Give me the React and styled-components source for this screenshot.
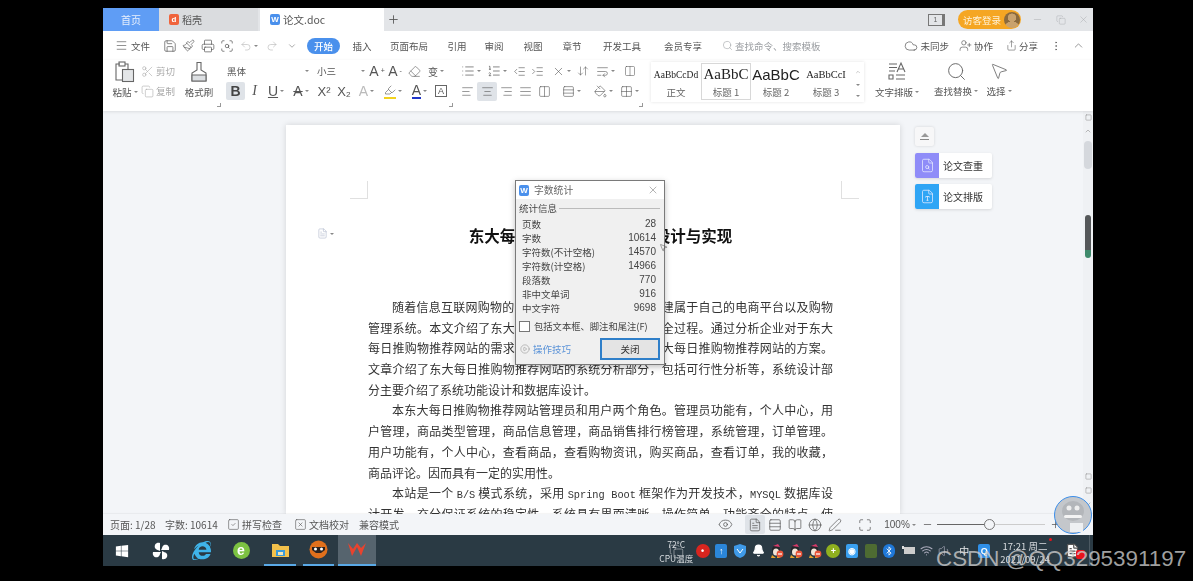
import React from "react";
import styled, { createGlobalStyle } from "styled-components";
import {
  Menu, Save, Printer, Undo2, Redo2, ChevronDown, ChevronUp, Search, Cloud, UserPlus, Share, EllipsisVertical,
  Scissors, Copy, Paintbrush, Eraser, List, ListOrdered, IndentDecrease, IndentIncrease,
  AlignLeft, AlignCenter, AlignRight, AlignJustify, Columns2, PaintBucket, Grid2x2, Eye, FileText, Rows3,
  BookOpen, Globe, PenLine, Maximize, Minus, Plus, SquareCheck, SquareX, Bell, Wifi, Volume1,
  Bluetooth, CirclePlay, X, Square, Highlighter, ArrowDownUp, WrapText, ScanSearch, FileSearch, FileType, MousePointer2
} from "lucide-react";
import { FaInternetExplorer, FaWindows } from "react-icons/fa";

const GlobalStyle = createGlobalStyle`
  html, body { margin: 0; background: #000; overflow: hidden; }
  body { font-family: "Noto Sans CJK SC", "Liberation Sans", sans-serif; color: #444; }
`;

const Stage = styled.div`
  width: 1193px;
  height: 581px;
  padding: 8px 0 0 103px;
  box-sizing: border-box;
  position: relative;
`;

const Win = styled.div`
  width: 990px;
  height: 558px;
  display: flex;
  flex-direction: column;
  position: relative;
  background: #fff;
  overflow: hidden;
  filter: blur(0.35px);
`;

/* title tabs */
const TabBar = styled.div`
  height: 23px;
  flex: none;
  display: flex;
  align-items: stretch;
  background: #e3e5e8;
  font-size: 10px;
`;

const HomeTab = styled.div`
  width: 56px;
  background: #5f9df5;
  color: #e8f0fd;
  display: flex;
  align-items: center;
  justify-content: center;
`;

const DocTab = styled.div`
  width: ${p => p.$w}px;
  margin-right: ${p => p.$mr || 0}px;
  background: ${p => (p.$active ? "#fff" : "#dadcdf")};
  display: flex;
  align-items: center;
  gap: 3px;
  padding-left: 10px;
  box-sizing: border-box;
  color: #555;
  font-size: ${p => (p.$active ? 10.5 : 10)}px;
`;

const TabIcon = styled.span`
  width: 10px;
  height: 11px;
  border-radius: 2px;
  background: ${p => p.$c};
  color: #fff;
  font: bold 8px "Liberation Sans", sans-serif;
  display: flex;
  align-items: center;
  justify-content: center;
`;

const AddTab = styled.div`
  width: 18px;
  display: flex;
  align-items: center;
  justify-content: center;
  color: #555;
`;

const TabRight = styled.div`
  margin: 0 -2px 0 auto;
  display: flex;
  align-items: center;
  color: #a5a8ab;
`;

const SlateBox = styled.span`
  width: 13px;
  height: 10px;
  border: 1px solid #777;
  border-right-width: 3px;
  font: 7px "Liberation Sans", sans-serif;
  color: #666;
  display: flex;
  align-items: center;
  justify-content: center;
  margin-right: 13px;
`;

const Guest = styled.div`
  width: 63px;
  height: 19px;
  border-radius: 10px;
  background: #f5a623;
  color: #fff2d8;
  font-size: 9.5px;
  display: flex;
  align-items: center;
  justify-content: space-between;
  padding: 0 1px 0 5px;
  box-sizing: border-box;
  margin-right: 5px;
`;

const GuestFace = styled.span`
  width: 16px;
  height: 16px;
  border-radius: 50%;
  background: radial-gradient(circle at 50% 36%, #c9a26d 0 4px, transparent 4.5px), radial-gradient(circle at 50% 110%, #c9a26d 0 8px, #8a6a3e 8.5px);
`;

const WinBtn = styled.span`
  width: 23px;
  display: flex;
  justify-content: center;
`;

/* menu row */
const MenuRow = styled.div`
  height: 29px;
  flex: none;
  display: flex;
  align-items: center;
  padding-left: 12px;
  font-size: 9.5px;
  color: #555;
`;

const FileMenu = styled.div`
  width: 45px;
  display: flex;
  align-items: center;
  gap: 3px;
`;

const Tool = styled.div`
  width: ${p => p.$w || 19}px;
  height: ${p => p.$h || 19}px;
  margin-right: ${p => p.$mr || 0}px;
  flex: none;
  display: flex;
  align-items: center;
  justify-content: center;
  gap: 2px;
  color: ${p => p.$c || "#555"};
  background: ${p => (p.$active ? "#dfe3e8" : "transparent")};
  border-radius: 2px;
  font: ${p => p.$font || '14px "Liberation Sans", sans-serif'};
`;

const Caret = styled.i`
  width: 0;
  height: 0;
  flex: none;
  border: 2px solid transparent;
  border-top: 2.5px solid #888;
  border-bottom: 0;
`;

const Sup = styled.sup`
  font-size: 7px;
  line-height: 0;
`;

const Marked = styled.span`
  display: flex;
  align-items: center;
  height: 14px;
  line-height: 13px;
  border-bottom: 2px solid ${p => p.$c};
`;

const BoxedA = styled.span`
  width: 12px;
  height: 12px;
  box-sizing: border-box;
  border: 1px solid #666;
  font: 9px/10px "Liberation Sans", sans-serif;
  text-align: center;
`;

const StartPill = styled.div`
  width: 33px;
  height: 16px;
  margin-left: 5px;
  border-radius: 8px;
  background: #4a90ec;
  color: #fff;
  font-weight: 500;
  display: flex;
  align-items: center;
  justify-content: center;
`;

const MenuTab = styled.div`
  width: ${p => p.$w}px;
  text-align: center;
  flex: none;
`;

const SearchBox = styled.div`
  margin-left: 14px;
  display: flex;
  align-items: center;
  gap: 2px;
  color: #9a9da1;
`;

const MenuRight = styled.div`
  margin-left: auto;
  display: flex;
  align-items: center;
  padding-right: 8px;
`;

const MenuAction = styled.div`
  display: flex;
  align-items: center;
  gap: 2px;
  margin-right: ${p => p.$mr}px;
`;

/* ribbon */
const Ribbon = styled.div`
  height: 51px;
  flex: none;
  display: flex;
  padding-left: 12px;
  box-shadow: 0 1px 3px rgba(0, 0, 0, 0.1);
  position: relative;
  z-index: 2;
  background: #fff;
`;

const Group = styled.div`
  width: ${p => p.$w}px;
  flex: none;
  position: relative;
  display: ${p => (p.$flex ? "flex" : "block")};
  padding-top: 1px;
  box-sizing: border-box;
  ${p => p.$launcher && `
    &::after {
      content: "";
      position: absolute;
      right: ${p.$launcher}px;
      bottom: 4px;
      width: 3px;
      height: 3px;
      border-right: 1px solid #999;
      border-bottom: 1px solid #999;
    }
  `}
`;

const Row = styled.div`
  display: flex;
  align-items: center;
  height: 20px;
`;

const BigTool = styled.div`
  width: ${p => p.$w}px;
  margin-left: ${p => p.$ml || 0}px;
  flex: none;
  display: flex;
  flex-direction: column;
  align-items: center;
  font-size: 9.5px;
  color: #555;
`;

const BigIcon = styled.div`
  height: 22px;
  display: flex;
  align-items: center;
  color: #666;
`;

const BigLabel = styled.div`
  height: 18px;
  display: flex;
  align-items: center;
  gap: 2px;
  white-space: nowrap;
`;

const SmallCol = styled.div`
  width: 38px;
  margin-left: 6px;
  flex: none;
  font-size: 9.5px;
  color: #aaa;
`;

const SmallItem = styled.div`
  height: 20px;
  display: flex;
  align-items: center;
  gap: 2px;
`;

const Select = styled.div`
  width: ${p => p.$w}px;
  margin-right: ${p => p.$mr || 0}px;
  height: 18px;
  flex: none;
  display: flex;
  align-items: center;
  justify-content: space-between;
  padding: 0 3px 0 1px;
  box-sizing: border-box;
  font-size: 9.5px;
  color: #555;
`;

const Gallery = styled.div`
  width: 213px;
  height: 40px;
  margin-top: 2px;
  padding-top: 1px;
  box-sizing: border-box;
  display: flex;
  flex: none;
  box-shadow: 0 0 3px rgba(0, 0, 0, 0.12);
`;

const StyleItem = styled.div`
  width: 50px;
  height: 37px;
  flex: none;
  box-sizing: border-box;
  border: ${p => (p.$active ? "1px solid #d8d8d8" : "1px solid transparent")};
  overflow: hidden;
  display: flex;
  flex-direction: column;
  align-items: center;
  font-size: 9.5px;
  line-height: 14px;
  color: #666;
`;

const Sample = styled.div`
  height: 21px;
  flex: none;
  display: flex;
  align-items: center;
  color: #222;
  white-space: nowrap;
  font: ${p => p.$font};
`;

const GalleryArrows = styled.div`
  flex: 1;
  display: flex;
  flex-direction: column;
  justify-content: space-around;
  align-items: center;
  padding: 1px 0;
`;

/* document area */
const DocArea = styled.div`
  flex: 1;
  min-height: 0;
  display: flex;
  background: #f3f5f8;
  overflow: hidden;
`;

const Page = styled.div`
  width: 614px;
  margin: 14px 0 0 183px;
  flex: none;
  background: #fff;
  box-shadow: 0 0 6px rgba(0, 0, 0, 0.14);
  padding: 56px 67px 0 82px;
  box-sizing: border-box;
  position: relative;
  color: #333;
`;

const Crops = styled.div`
  height: 18px;
  margin: 0 -26px 0 -18px;
  display: flex;
  justify-content: space-between;
`;

const Crop = styled.span`
  width: 17px;
  height: 17px;
  border-bottom: 1px solid #e0e0e0;
  ${p => (p.$right ? "border-left" : "border-right")}: 1px solid #e0e0e0;
`;

const Title = styled.h1`
  margin: 24px 0 50px;
  height: 24px;
  font-size: 15.5px;
  line-height: 24px;
  font-weight: 700;
  color: #111;
  text-align: center;
`;

const MarginMark = styled.div`
  position: absolute;
  left: 31px;
  top: 103px;
  display: flex;
  align-items: center;
  gap: 2px;
  color: #b9c1d2;
`;

const Line = styled.div`
  height: 20.7px;
  line-height: 20.7px;
  font-size: 12px;
  white-space: nowrap;
  text-align: justify;
  text-align-last: ${p => (p.$short ? "left" : "justify")};
  padding-left: ${p => (p.$indent ? 24 : 0)}px;
`;

const Latin = styled.span`
  font-family: "Liberation Mono", monospace;
  font-size: 10.3px;
`;

const Side = styled.div`
  margin: 16px 0 0 15px;
  width: 77px;
  flex: none;
  display: flex;
  flex-direction: column;
  align-items: flex-start;
`;

const EjectBtn = styled.div`
  width: 19px;
  height: 19px;
  background: #f7f7f8;
  box-shadow: 0 0 3px rgba(0, 0, 0, 0.14);
  border-radius: 2px;
  display: flex;
  flex-direction: column;
  align-items: center;
  justify-content: center;
  gap: 2px;
  margin-bottom: 7px;
`;

const EjectTri = styled.i`
  width: 0;
  height: 0;
  border: 4px solid transparent;
  border-bottom: 4px solid #999;
  border-top: 0;
`;

const EjectBar = styled.i`
  width: 9px;
  height: 1px;
  background: #888;
`;

const SideCard = styled.div`
  width: 77px;
  height: 25px;
  margin-bottom: 6px;
  background: #fff;
  border-radius: 2px;
  box-shadow: 0 1px 3px rgba(0, 0, 0, 0.12);
  display: flex;
  align-items: center;
  font-size: 10px;
  color: #333;
  overflow: hidden;
`;

const SideIcon = styled.div`
  width: 24px;
  height: 25px;
  margin-right: 4px;
  background: ${p => p.$c};
  color: #e8ecff;
  display: flex;
  align-items: center;
  justify-content: center;
`;

const Scroll = styled.div`
  margin-left: auto;
  width: 10px;
  flex: none;
  padding-bottom: 4px;
  display: flex;
  flex-direction: column;
  align-items: center;
  background: #eff1f4;
  color: #999;
`;

const ScrollIcon = styled.div`
  height: ${p => p.$h}px;
  flex: none;
  display: flex;
  align-items: center;
  justify-content: center;
`;

const ThumbLight = styled.div`
  width: 8px;
  height: 28px;
  margin-top: 3px;
  border-radius: 4px;
  background: #d5d8dd;
`;

const ThumbDark = styled.div`
  width: 6px;
  height: 43px;
  margin: 46px 0 auto;
  border-radius: 3px;
  background: linear-gradient(#55585a 0 82%, #3f8a6c 82% 100%);
`;

/* status bar */
const StatusBar = styled.div`
  height: 21px;
  flex: none;
  display: flex;
  align-items: center;
  padding-left: 7px;
  background: #f3f5f8;
  font-size: 10px;
  color: #555;
  position: relative;
  z-index: 2;
  box-shadow: 0 -1px 1px rgba(0, 0, 0, 0.04);
`;

const StatusItem = styled.div`
  width: ${p => p.$w}px;
  flex: none;
  display: flex;
  align-items: center;
  gap: 2px;
`;

const StatusRight = styled.div`
  margin-left: auto;
  display: flex;
  align-items: center;
  padding-right: 31px;
`;

const Zoom = styled.div`
  width: 108px;
  height: 1px;
  margin: 0 3px;
  background: linear-gradient(90deg, #666 0 48%, #ccc 48% 100%);
  position: relative;
`;

const Knob = styled.span`
  position: absolute;
  left: 47px;
  top: -5px;
  width: 9px;
  height: 9px;
  border-radius: 50%;
  border: 1px solid #777;
  background: #f3f5f8;
`;

/* taskbar */
const Taskbar = styled.div`
  height: 31px;
  flex: none;
  display: flex;
  background: #2a3a44;
  color: #d9dde0;
`;

const TaskCell = styled.div`
  width: ${p => p.$w}px;
  margin-left: ${p => p.$ml || 0}px;
  flex: none;
  box-sizing: border-box;
  display: flex;
  align-items: center;
  justify-content: center;
  color: #fff;
  background: ${p => (p.$active ? "#56646e" : "transparent")};
  border-bottom: ${p => (p.$open ? "2px solid #5aa9e6" : "0")};
`;

const GreenE = styled.span`
  width: 17px;
  height: 17px;
  border-radius: 50%;
  background: #7cc242;
  color: #fff;
  font: bold 14px/16px "Liberation Sans", sans-serif;
  text-align: center;
`;

const Cpu = styled.div`
  width: 34px;
  margin-left: auto;
  flex: none;
  font-size: 8.5px;
  line-height: 14px;
  padding-top: 2px;
  box-sizing: border-box;
  text-align: center;
  position: relative;
  white-space: nowrap;
`;

const CpuIcon = styled.span`
  position: absolute;
  left: 10px;
  top: 9px;
  display: flex;
  color: #c9cdd0;
`;

const TrayCell = styled.div`
  width: ${p => p.$w || 18.7}px;
  flex: none;
  display: flex;
  align-items: center;
  justify-content: center;
  font-size: 10px;
  color: ${p => p.$c || "#e6e8ea"};
`;

const TrayChip = styled.span`
  width: ${p => p.$s || 12}px;
  height: ${p => p.$s || 14}px;
  border-radius: ${p => p.$r || 2}px;
  background: ${p => p.$c};
  color: #fff;
  display: flex;
  align-items: center;
  justify-content: center;
  font: bold 9px "Liberation Sans", sans-serif;
`;

const Clock = styled.div`
  width: 60px;
  flex: none;
  font-size: 9.5px;
  line-height: 13px;
  padding-top: 5px;
  box-sizing: border-box;
  text-align: center;
  white-space: nowrap;
  position: relative;
  &::after {
    content: "";
    position: absolute;
    right: 3px;
    top: 3px;
    width: 3px;
    height: 3px;
    border-radius: 50%;
    background: #e8131a;
  }
`;

const Notify = styled.div`
  width: 34px;
  flex: none;
  position: relative;
  display: flex;
  align-items: center;
  justify-content: center;
  color: #fff;
`;

const NotifyBadge = styled.span`
  position: absolute;
  left: 21px;
  top: 15px;
  width: 9px;
  height: 9px;
  background: #e8131a;
  border-radius: 2px;
`;

const EdgeLine = styled.div`
  width: 3px;
  flex: none;
  border-left: 1px solid #4b5962;
`;

/* word count dialog */
const Dialog = styled.div`
  position: absolute;
  left: 412px;
  top: 172px;
  width: 150px;
  height: 185px;
  box-sizing: border-box;
  z-index: 5;
  background: #f0f0f0;
  border: 1px solid #7a7a7a;
  box-shadow: 0 2px 6px rgba(0, 0, 0, 0.25);
  font-size: 9.5px;
  color: #444;
`;

const DlgHead = styled.div`
  height: 18px;
  background: #fff;
  display: flex;
  align-items: center;
  padding: 0 5px 0 3px;
  gap: 5px;
  font-size: 9.8px;
  color: #666;
`;

const DlgClose = styled.span`
  margin-left: auto;
  display: flex;
  color: #777;
`;

const Legend = styled.div`
  display: flex;
  align-items: center;
  gap: 2px;
  height: 14px;
  margin: 2px 4px 2px 3px;
  &::after {
    content: "";
    flex: 1;
    height: 1px;
    background: #bbb;
  }
`;

const Stat = styled.div`
  height: 14px;
  line-height: 14px;
  margin: 0 8px 0 6px;
  display: flex;
  justify-content: space-between;
  white-space: nowrap;
`;

const Num = styled.span`
  font-family: "Liberation Sans", sans-serif;
  font-size: 10px;
`;

const CheckRow = styled.div`
  display: flex;
  align-items: center;
  gap: 4px;
  margin: 4px 0 0 3px;
  height: 14px;
  font-size: 9.3px;
  white-space: nowrap;
`;

const CheckBox = styled.span`
  width: 9px;
  height: 9px;
  background: #fff;
  border: 1px solid #777;
`;

const DlgFoot = styled.div`
  margin: 5px 4px 0 4px;
  display: flex;
  align-items: center;
`;

const HelpLink = styled.div`
  display: flex;
  align-items: center;
  gap: 3px;
  color: #5b93d8;
`;

const CloseBtn = styled.div`
  margin-left: auto;
  width: 60px;
  height: 22px;
  box-sizing: border-box;
  border: 2px solid #2f7fc9;
  background: #e4e4e4;
  color: #333;
  display: flex;
  align-items: center;
  justify-content: center;
`;

const Pointer = styled.div`
  position: absolute;
  left: 556px;
  top: 235px;
  z-index: 6;
  display: flex;
  color: #333;
`;

const Robot = styled.div`
  position: absolute;
  left: 951px;
  top: 488px;
  width: 38px;
  height: 38px;
  z-index: 6;
  box-sizing: border-box;
  border: 1px solid #3b8eea;
  border-radius: 50%;
  background: #c4c7cb;
  display: flex;
`;

const Watermark = styled.div`
  position: absolute;
  left: 936px;
  top: 545px;
  font: 22.4px/27px "Liberation Sans", sans-serif;
  white-space: nowrap;
  color: rgba(205, 205, 205, 0.78);
  z-index: 9;
`;

const ic = { size: 14, strokeWidth: 1.2 };
const sm = { size: 13, strokeWidth: 1.1 };

const PasteIcon = () => (
  <svg width="22" height="22" viewBox="0 0 22 22" fill="none" stroke="currentColor" strokeWidth="1.1">
    <path d="M6 3H2v16h6" />
    <rect x="5" y="1" width="6" height="4" />
    <path d="M11 3h3v5" />
    <rect x="8.5" y="8.5" width="11" height="12" fill="#e4e6e8" />
  </svg>
);

const BrushIcon = () => (
  <svg width="22" height="22" viewBox="0 0 22 22" fill="none" stroke="currentColor" strokeWidth="1.1">
    <path d="M9 1.5h4V9l5 3v8H4v-8l5-3z" />
    <path d="M4 14h14v6H4z" fill="#dcdfe2" />
  </svg>
);

const TextLayoutIcon = () => (
  <svg width="22" height="22" viewBox="0 0 22 22" fill="none" stroke="currentColor" strokeWidth="1.1">
    <path d="M3 3h8M3 6.5h8M3 10h6M3 14h4v4H3zM10 14h9M10 18h9" />
    <path d="M11 11l4-9 4 9M12.5 8h5" />
  </svg>
);

const Penguin = () => (
  <svg width="14" height="16" viewBox="0 0 14 16">
    <ellipse cx="6" cy="7" rx="4" ry="5" fill="#23252a" />
    <ellipse cx="6" cy="9" rx="3" ry="3.6" fill="#f2e6d8" />
    <path d="M2 12l-1 3h5zM7 13l0 2h4z" fill="#e8a32a" />
    <path d="M3 3l5-2 2 3z" fill="#d83a6a" />
    <circle cx="10" cy="11" r="3.4" fill="#e8553a" />
    <rect x="8" y="10.4" width="4" height="1.2" fill="#fff" />
  </svg>
);

const lines = [
  ["随着信息互联网购物的飞速发展，国内很多企业搭建属于自己的电商平台以及购物", true],
  ["管理系统。本文介绍了东大每日推购物推荐网站的开发全过程。通过分析企业对于东大"],
  ["每日推购物推荐网站的需求，创建了一个计算机管理东大每日推购物推荐网站的方案。"],
  ["文章介绍了东大每日推购物推荐网站的系统分析部分，包括可行性分析等，系统设计部"],
  ["分主要介绍了系统功能设计和数据库设计。", false, true],
  ["本东大每日推购物推荐网站管理员和用户两个角色。管理员功能有，个人中心，用", true],
  ["户管理，商品类型管理，商品信息管理，商品销售排行榜管理，系统管理，订单管理。"],
  ["用户功能有，个人中心，查看商品，查看购物资讯，购买商品，查看订单，我的收藏，"],
  ["商品评论。因而具有一定的实用性。", false, true],
];

const stats = [
  ["页数", "28"],
  ["字数", "10614"],
  ["字符数(不计空格)", "14570"],
  ["字符数(计空格)", "14966"],
  ["段落数", "770"],
  ["非中文单词", "916"],
  ["中文字符", "9698"],
];

const menuTabs = [["插入", 44], ["页面布局", 50], ["引用", 46], ["审阅", 28], ["视图", 50], ["章节", 28], ["开发工具", 72], ["会员专享", 50]];

export default function App() {
  return (
    <Stage>
      <GlobalStyle />
      <Win>
        <TabBar>
          <HomeTab>首页</HomeTab>
          <DocTab $w={99} $mr={2}><TabIcon $c="#f0643c">d</TabIcon>稻壳</DocTab>
          <DocTab $w={124} $active><TabIcon $c="#4a90ec">W</TabIcon>论文.doc</DocTab>
          <AddTab><Plus size={13} strokeWidth={1.6} /></AddTab>
          <TabRight>
            <SlateBox>1</SlateBox>
            <Guest>访客登录<GuestFace /></Guest>
            <WinBtn><Minus size={11} strokeWidth={1} /></WinBtn>
            <WinBtn><Copy size={10} strokeWidth={1} /></WinBtn>
            <WinBtn><X size={11} strokeWidth={1} /></WinBtn>
          </TabRight>
        </TabBar>

        <MenuRow>
          <FileMenu><Menu size={13} strokeWidth={1.2} />文件</FileMenu>
          <Tool><Save {...ic} /></Tool>
          <Tool><Paintbrush size={13} strokeWidth={1.2} /></Tool>
          <Tool><Printer {...ic} /></Tool>
          <Tool><ScanSearch {...ic} /></Tool>
          <Tool $w={26} $c="#b5b5b5"><Undo2 size={12} strokeWidth={1.2} /><Caret /></Tool>
          <Tool $w={20} $c="#b5b5b5"><Redo2 size={12} strokeWidth={1.2} /></Tool>
          <Tool $w={20}><ChevronDown size={10} strokeWidth={1.2} /></Tool>
          <StartPill>开始</StartPill>
          {menuTabs.map(([t, w]) => <MenuTab key={t} $w={w}>{t}</MenuTab>)}
          <SearchBox><Search size={11} strokeWidth={1.2} />查找命令、搜索模板</SearchBox>
          <MenuRight>
            <MenuAction $mr={10}><Cloud size={14} strokeWidth={1.2} />未同步</MenuAction>
            <MenuAction $mr={13}><UserPlus size={13} strokeWidth={1.2} />协作</MenuAction>
            <MenuAction $mr={12}><Share size={11} strokeWidth={1.2} />分享</MenuAction>
            <MenuAction $mr={10}><EllipsisVertical size={12} strokeWidth={1.2} /></MenuAction>
            <MenuAction $mr={0}><ChevronUp size={13} strokeWidth={1.1} /></MenuAction>
          </MenuRight>
        </MenuRow>

        <Ribbon>
          <Group $w={111} $flex $launcher={5}>
            <BigTool $w={20}>
              <BigIcon><PasteIcon /></BigIcon>
              <BigLabel>粘贴<Caret /></BigLabel>
            </BigTool>
            <SmallCol>
              <SmallItem><Scissors {...sm} />剪切</SmallItem>
              <SmallItem><Copy {...sm} />复制</SmallItem>
            </SmallCol>
            <BigTool $w={28} $ml={6}>
              <BigIcon><BrushIcon /></BigIcon>
              <BigLabel>格式刷</BigLabel>
            </BigTool>
          </Group>

          <Group $w={232} $launcher={5}>
            <Row>
              <Select $w={86} $mr={4}>黑体<Caret /></Select>
              <Select $w={52}>小三<Caret /></Select>
              <Tool $w={18}>A<Sup>+</Sup></Tool>
              <Tool $w={18}>A<Sup>-</Sup></Tool>
              <Tool $w={21}><Eraser {...sm} /></Tool>
              <Tool $w={22} $font='10px "Noto Sans CJK SC", sans-serif'>变<Caret /></Tool>
            </Row>
            <Row>
              <Tool $w={19} $h={18} $active $font='bold 14px "Liberation Sans", sans-serif' $c="#444">B</Tool>
              <Tool $w={19} $font='italic 14px "Liberation Serif", serif'>I</Tool>
              <Tool $w={24}><u>U</u><Caret /></Tool>
              <Tool $w={26}><s>A</s><Caret /></Tool>
              <Tool $w={20} $font='13px "Liberation Sans", sans-serif'>X²</Tool>
              <Tool $w={20} $font='13px "Liberation Sans", sans-serif'>X₂</Tool>
              <Tool $w={25} $c="#bbb">A<Caret /></Tool>
              <Tool $w={28}><Marked $c="#f2d21e"><Highlighter size={12} strokeWidth={1.2} /></Marked><Caret /></Tool>
              <Tool $w={25}><Marked $c="#1f35c9">A</Marked><Caret /></Tool>
              <Tool $w={18}><BoxedA>A</BoxedA></Tool>
            </Row>
          </Group>

          <Group $w={193} $launcher={8}>
            <Row>
              <Tool $w={26}><List {...ic} /><Caret /></Tool>
              <Tool $w={26}><ListOrdered {...ic} /><Caret /></Tool>
              <Tool $w={18}><IndentDecrease {...sm} /></Tool>
              <Tool $w={19}><IndentIncrease {...sm} /></Tool>
              <Tool $w={28}><X {...sm} /><Caret /></Tool>
              <Tool $w={15}><ArrowDownUp size={12} strokeWidth={1.1} /></Tool>
              <Tool $w={30}><WrapText {...sm} /><Caret /></Tool>
              <Tool $w={20}><Columns2 size={12} strokeWidth={1.1} /></Tool>
            </Row>
            <Row>
              <Tool><AlignLeft {...sm} /></Tool>
              <Tool $w={20} $active><AlignCenter {...sm} /></Tool>
              <Tool><AlignRight {...sm} /></Tool>
              <Tool><AlignJustify {...sm} /></Tool>
              <Tool><Columns2 {...sm} /></Tool>
              <Tool $w={35}><Rows3 {...sm} /><Caret /></Tool>
              <Tool $w={28}><PaintBucket {...sm} /><Caret /></Tool>
              <Tool $w={24}><Grid2x2 {...sm} /><Caret /></Tool>
            </Row>
          </Group>

          <Gallery>
            <StyleItem><Sample $font='9.5px "Liberation Serif", serif'>AaBbCcDd</Sample>正文</StyleItem>
            <StyleItem $active><Sample $font='15px "Liberation Serif", serif'>AaBbC</Sample>标题 1</StyleItem>
            <StyleItem><Sample $font='15px "Liberation Sans", sans-serif'>AaBbC</Sample>标题 2</StyleItem>
            <StyleItem><Sample $font='10.5px "Liberation Serif", serif'>AaBbCcI</Sample>标题 3</StyleItem>
            <GalleryArrows>
              <ChevronUp size={6} color="#999" />
              <Caret />
              <Caret />
            </GalleryArrows>
          </Gallery>

          <Group $w={72} $flex>
            <BigTool $w={40} $ml={13}>
              <BigIcon><TextLayoutIcon /></BigIcon>
              <BigLabel>文字排版<Caret /></BigLabel>
            </BigTool>
          </Group>
          <BigTool $w={40}>
            <BigIcon><Search size={21} strokeWidth={1.1} /></BigIcon>
            <BigLabel>查找替换<Caret /></BigLabel>
          </BigTool>
          <BigTool $w={30} $ml={8}>
            <BigIcon><MousePointer2 size={20} strokeWidth={1} /></BigIcon>
            <BigLabel>选择<Caret /></BigLabel>
          </BigTool>
        </Ribbon>

        <DocArea>
          <Page>
            <Crops><Crop /><Crop $right /></Crops>
            <MarginMark><FileText size={11} strokeWidth={1.5} /><Caret /></MarginMark>
            <Title>东大每日推购物推荐网站的设计与实现</Title>
            {lines.map(([t, indent, short]) => <Line key={t} $indent={indent} $short={short}>{t}</Line>)}
            <Line $indent>本站是一个 <Latin>B/S</Latin> 模式系统，采用 <Latin>Spring Boot</Latin> 框架作为开发技术，<Latin>MYSQL</Latin> 数据库设</Line>
            <Line>计开发，充分保证系统的稳定性。系统具有界面清晰、操作简单，功能齐全的特点，使</Line>
          </Page>
          <Side>
            <EjectBtn><EjectTri /><EjectBar /></EjectBtn>
            <SideCard><SideIcon $c="#8f8cf8"><FileSearch size={15} strokeWidth={1.2} /></SideIcon>论文查重</SideCard>
            <SideCard><SideIcon $c="#2fa5f5"><FileType size={15} strokeWidth={1.2} /></SideIcon>论文排版</SideCard>
          </Side>
          <Scroll>
            <ScrollIcon $h={13}><Square size={7} /></ScrollIcon>
            <ScrollIcon $h={14}><ChevronUp size={8} /></ScrollIcon>
            <ThumbLight />
            <ThumbDark />
            <ScrollIcon $h={14}><Square size={7} /></ScrollIcon>
            <ScrollIcon $h={14}><Square size={7} /></ScrollIcon>
            <ScrollIcon $h={13}><ChevronDown size={8} /></ScrollIcon>
          </Scroll>
        </DocArea>

        <StatusBar>
          <StatusItem $w={55}>页面: 1/28</StatusItem>
          <StatusItem $w={62}>字数: 10614</StatusItem>
          <StatusItem $w={67}><SquareCheck size={13} strokeWidth={1.1} />拼写检查</StatusItem>
          <StatusItem $w={65}><SquareX size={13} strokeWidth={1.1} />文档校对</StatusItem>
          <StatusItem $w={50}>兼容模式</StatusItem>
          <StatusRight>
            <Tool $w={20} $mr={10}><Eye size={15} strokeWidth={1.2} /></Tool>
            <Tool $w={20} $active><FileText {...ic} /></Tool>
            <Tool $w={20}><Rows3 {...ic} /></Tool>
            <Tool $w={20}><BookOpen {...ic} /></Tool>
            <Tool $w={20}><Globe {...ic} /></Tool>
            <Tool $w={20} $mr={5}><PenLine {...ic} /></Tool>
            <Tool $w={30}><Maximize {...ic} /></Tool>
            <Tool $w={40} $font='10px "Liberation Sans", sans-serif'>100%<Caret /></Tool>
            <Tool $w={14}><Minus size={11} strokeWidth={1.6} /></Tool>
            <Zoom><Knob /></Zoom>
            <Tool $w={14}><Plus size={11} strokeWidth={1.6} /></Tool>
          </StatusRight>
        </StatusBar>

        <Taskbar>
          <TaskCell $w={38}><FaWindows size={14} /></TaskCell>
          <TaskCell $w={39}>
            <svg width="18" height="18" viewBox="0 0 18 18" fill="#fff">
              <path d="M8 1C4 0 2 3 3 6c1 2 4 2 5 3zM17 8c1-4-2-6-5-5-2 1-2 4-3 5zM10 17c4 1 6-2 5-5-1-2-4-2-5-3zM1 10c-1 4 2 6 5 5 2-1 2-4 3-5z" />
            </svg>
          </TaskCell>
          <TaskCell $w={43}><FaInternetExplorer size={19} color="#3fb4ea" /></TaskCell>
          <TaskCell $w={36}><GreenE>e</GreenE></TaskCell>
          <TaskCell $w={32} $ml={5} $open>
            <svg width="17" height="15" viewBox="0 0 17 15">
              <path d="M0 2h6l2 2h9v11H0z" fill="#f3c14b" />
              <rect x="4" y="8" width="9" height="6" fill="#3a9ad9" />
              <rect x="6" y="10" width="5" height="3" fill="#f3e6b8" />
            </svg>
          </TaskCell>
          <TaskCell $w={31} $ml={7} $open>
            <svg width="19" height="19" viewBox="0 0 19 19">
              <circle cx="9.5" cy="9.5" r="9" fill="#e0701c" />
              <path d="M3 7h13v3l-4 3H7l-4-3z" fill="#2b2320" />
              <circle cx="6.5" cy="9" r="1.5" fill="#fff" />
              <circle cx="12.5" cy="9" r="1.5" fill="#fff" />
            </svg>
          </TaskCell>
          <TaskCell $w={38} $ml={4} $open $active>
            <svg width="20" height="15" viewBox="0 0 20 15">
              <path d="M1 1l4 13 5-9 4 9 5-13-5 5-4-5-4 6z" fill="#e8432e" />
            </svg>
          </TaskCell>

          <Cpu>72°C<br />CPU温度<CpuIcon><Copy size={15} strokeWidth={0.9} /></CpuIcon></Cpu>
          <TrayCell><TrayChip $s={14} $r={7} $c="#d8251f">•</TrayChip></TrayCell>
          <TrayCell><TrayChip $c="#2b86d9">↑</TrayChip></TrayCell>
          <TrayCell>
            <svg width="12" height="14" viewBox="0 0 12 14"><path d="M6 0l6 2v5c0 4-3 6-6 7-3-1-6-3-6-7V2z" fill="#3f9ae8" /><path d="M3 5l3 4 3-4" stroke="#fff" fill="none" /></svg>
          </TrayCell>
          <TrayCell $c="#fff"><Bell size={13} fill="#fff" /></TrayCell>
          <TrayCell><Penguin /></TrayCell>
          <TrayCell><Penguin /></TrayCell>
          <TrayCell><Penguin /></TrayCell>
          <TrayCell><TrayChip $s={14} $r={7} $c="#8fb01f">+</TrayChip></TrayCell>
          <TrayCell><TrayChip $c="#3aa0f0">◉</TrayChip></TrayCell>
          <TrayCell><TrayChip $c="#4e6b32" /></TrayCell>
          <TrayCell><TrayChip $r={7} $c="#1f78d8"><Bluetooth size={10} /></TrayChip></TrayCell>
          <TrayCell>
            <svg width="13" height="9" viewBox="0 0 13 9"><rect x="0" y="0" width="2" height="3" fill="#ddd" /><rect x="2" y="1" width="11" height="7" fill="#ccc" /></svg>
          </TrayCell>
          <TrayCell $c="#aab"><Wifi size={13} /></TrayCell>
          <TrayCell $c="#aab"><Volume1 size={14} strokeWidth={1.2} /></TrayCell>
          <TrayCell>中</TrayCell>
          <TrayCell $w={21.5}><TrayChip $c="#2f8fe8">Q</TrayChip></TrayCell>
          <Clock>17:21 周二<br />2021/09/24</Clock>
          <Notify><FileText size={15} fill="#fff" color="#555" /><NotifyBadge /></Notify>
          <EdgeLine />
        </Taskbar>

        <Dialog>
          <DlgHead><TabIcon $c="#4a90ec">W</TabIcon>字数统计<DlgClose><X size={12} strokeWidth={1.1} /></DlgClose></DlgHead>
          <Legend>统计信息</Legend>
          {stats.map(([k, v]) => <Stat key={k}><span>{k}</span><Num>{v}</Num></Stat>)}
          <CheckRow><CheckBox />包括文本框、脚注和尾注(F)</CheckRow>
          <DlgFoot>
            <HelpLink><CirclePlay size={10} strokeWidth={1.2} color="#888" />操作技巧</HelpLink>
            <CloseBtn>关闭</CloseBtn>
          </DlgFoot>
        </Dialog>
        <Pointer><MousePointer2 size={9} strokeWidth={1.2} /></Pointer>
        <Robot>
          <svg width="36" height="36" viewBox="0 0 36 36">
            <ellipse cx="18" cy="14" rx="11" ry="10" fill="#b3b6ba" />
            <circle cx="14" cy="11" r="2.5" fill="#eee" />
            <circle cx="22" cy="11" r="2.5" fill="#eee" />
            <rect x="9" y="18" width="18" height="3" rx="1.5" fill="#f3f3f3" />
            <rect x="15" y="26" width="13" height="9" fill="#eef0f2" />
          </svg>
        </Robot>
      </Win>
      <Watermark>CSDN @QQ3295391197</Watermark>
    </Stage>
  );
}
